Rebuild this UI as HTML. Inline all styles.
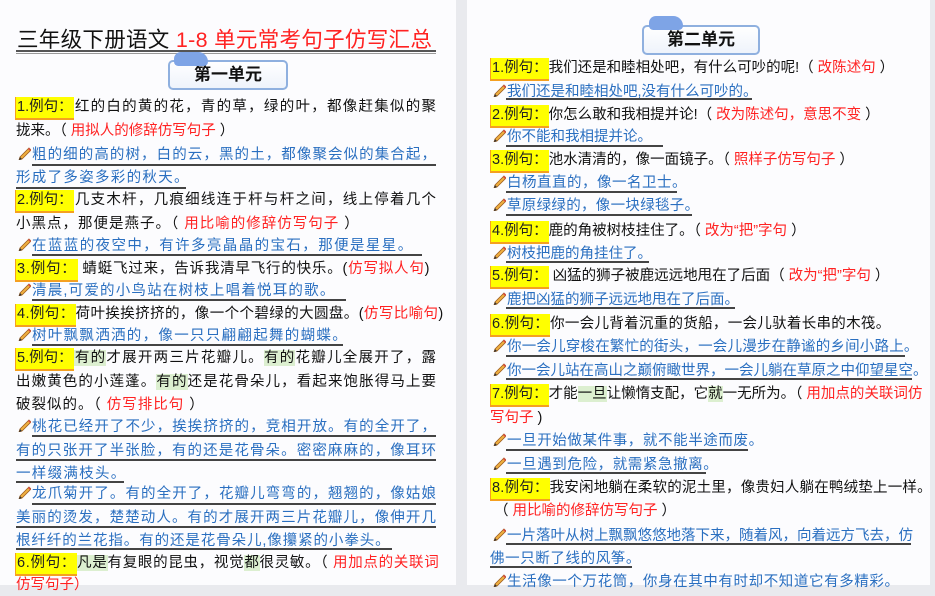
<!DOCTYPE html>
<html><head><meta charset="utf-8"><style>
body{margin:0;width:935px;height:585px;overflow:hidden;background:#e9eaee;position:relative;font-family:"Liberation Sans","Noto Sans CJK SC",sans-serif;}
.pg{position:absolute;top:0;height:585px;background:#fcfcfe;}
.l{position:absolute;white-space:nowrap;height:22px;line-height:22px;font-size:14.5px;color:#111;}
.j{text-align:justify;text-align-last:justify;}
.r{color:#f22;}
.b{color:#2a6fc0;}
.lab{display:inline-block;background:#ffff00;border-left:1px solid #f5a020;border-bottom:2px solid #f5a020;padding:0 1px;height:21px;line-height:21px;color:#222;}
.ul{position:absolute;height:2px;background:#444;}
.g{background:#dcefd0;}
.pen{position:absolute;width:13px;height:13px;}
.badge{position:absolute;height:26px;border:2px solid #8fb0df;border-radius:5px;background:linear-gradient(#fff,#eef3fb);font-size:17px;font-weight:bold;text-align:center;line-height:26px;color:#111;}
.cloud{position:absolute;width:34px;height:14px;background:#7ea4e6;border-radius:10px 14px 6px 6px;}
</style></head><body>
<div class="pg" style="left:0;width:456px;"></div>
<div class="pg" style="left:467px;width:463px;"></div>

<!-- title -->
<div class="l" style="left:17px;top:26px;height:28px;line-height:28px;font-size:21.5px;letter-spacing:0.3px;">三年级下册语文 <span class="r">1-8 单元常考句子仿写汇总</span></div>
<div class="ul" style="left:16px;top:50px;width:420px;height:2px;background:#555"></div>
<div class="ul" style="left:16px;top:53px;width:420px;height:1px;background:#999"></div>

<div class="badge" style="left:168px;top:60px;width:116px;">第一单元</div>
<div class="cloud" style="left:174px;top:52px;"></div>
<div class="badge" style="left:642px;top:25px;width:114px;">第二单元</div>
<div class="cloud" style="left:649px;top:16px;"></div>

<svg width="0" height="0" style="position:absolute"><defs><g id="p"><path d="M11 1 L13 3 L4 12 L1 13 L2 10 Z" fill="#f0b040" stroke="#a06020" stroke-width="0.8"/><path d="M11 1 L13 3 L12 4 L10 2Z" fill="#d44"/><path d="M1 13 L2 10 L4 12Z" fill="#333"/></g></defs></svg>

<!-- LEFT -->
<div class="l j" style="left:15px;top:96px;width:421px;"><span class="lab">1.例句：</span>红的白的黄的花，青的草，绿的叶，都像赶集似的聚</div>
<div class="l" style="left:16px;top:120px;">拢来。（ <span class="r">用拟人的修辞仿写句子</span> ）</div>
<svg class="pen" style="left:18px;top:147px"><use href="#p"/></svg>
<div class="l j b" style="left:32px;top:144px;width:404px;">粗的细的高的树，白的云，黑的土，都像聚会似的集合起，</div><div class="ul" style="left:32px;top:164px;width:404px"></div>
<div class="l b" style="left:16px;top:167px;letter-spacing:1.3px">形成了多姿多彩的秋天。</div><div class="ul" style="left:16px;top:187px;width:170px"></div>
<div class="l j" style="left:15px;top:189px;width:421px;"><span class="lab">2.例句：</span>几支木杆，几痕细线连于杆与杆之间，线上停着几个</div>
<div class="l" style="left:16px;top:213px;letter-spacing:1px">小黑点，那便是燕子。（ <span class="r">用比喻的修辞仿写句子</span> ）</div>
<svg class="pen" style="left:18px;top:238px"><use href="#p"/></svg>
<div class="l b" style="left:32px;top:235px;letter-spacing:1.4px">在蓝蓝的夜空中，有许多亮晶晶的宝石，那便是星星。</div><div class="ul" style="left:32px;top:254px;width:390px"></div>
<div class="l" style="left:15px;top:258px;letter-spacing:0.8px"><span class="lab">3.例句：</span> 蜻蜓飞过来，告诉我清早飞行的快乐。(<span class="r">仿写拟人句</span>)</div>
<svg class="pen" style="left:18px;top:283px"><use href="#p"/></svg>
<div class="l b" style="left:32px;top:280px;letter-spacing:1.2px">清晨,可爱的小鸟站在树枝上唱着悦耳的歌。</div><div class="ul" style="left:32px;top:299px;width:314px"></div>
<div class="l" style="left:15px;top:303px;letter-spacing:0.4px"><span class="lab">4.例句：</span>荷叶挨挨挤挤的，像一个个碧绿的大圆盘。(<span class="r">仿写比喻句</span>)</div>
<svg class="pen" style="left:18px;top:328px"><use href="#p"/></svg>
<div class="l b" style="left:32px;top:325px;letter-spacing:1.3px">树叶飘飘洒洒的，像一只只翩翩起舞的蝴蝶。</div><div class="ul" style="left:32px;top:344px;width:311px"></div>
<div class="l j" style="left:15px;top:347px;width:421px;"><span class="lab">5.例句：</span><span class="g">有的</span>才展开两三片花瓣儿。<span class="g">有的</span>花瓣儿全展开了，露</div>
<div class="l j" style="left:16px;top:371px;width:420px;">出嫩黄色的小莲蓬。<span class="g">有的</span>还是花骨朵儿，看起来饱胀得马上要</div>
<div class="l" style="left:16px;top:394px;letter-spacing:1px">破裂似的。（ <span class="r">仿写排比句</span> ）</div>
<svg class="pen" style="left:18px;top:419px"><use href="#p"/></svg>
<div class="l j b" style="left:32px;top:416px;width:404px;">桃花已经开了不少，挨挨挤挤的，竞相开放。有的全开了，</div><div class="ul" style="left:32px;top:435px;width:404px"></div>
<div class="l j b" style="left:16px;top:440px;width:420px;">有的只张开了半张脸，有的还是花骨朵。密密麻麻的，像耳环</div><div class="ul" style="left:16px;top:459px;width:420px"></div>
<div class="l b" style="left:16px;top:463px;letter-spacing:1.3px">一样缀满枝头。</div><div class="ul" style="left:16px;top:481px;width:108px"></div>
<svg class="pen" style="left:18px;top:486px"><use href="#p"/></svg>
<div class="l j b" style="left:32px;top:483px;width:404px;">龙爪菊开了。有的全开了，花瓣儿弯弯的，翘翘的，像姑娘</div><div class="ul" style="left:32px;top:503px;width:404px"></div>
<div class="l j b" style="left:16px;top:507px;width:420px;">美丽的烫发，楚楚动人。有的才展开两三片花瓣儿，像伸开几</div><div class="ul" style="left:16px;top:526px;width:420px"></div>
<div class="l b" style="left:16px;top:530px;letter-spacing:0.9px">根纤纤的兰花指。有的还是花骨朵儿,像攥紧的小拳头。</div><div class="ul" style="left:16px;top:548px;width:376px"></div>
<div class="l" style="left:15px;top:552px;letter-spacing:0.7px"><span class="lab">6.例句：</span><span class="g">凡是</span>有复眼的昆虫，视觉<span class="g">都</span>很灵敏。（ <span class="r">用加点的关联词</span></div>
<div class="l r" style="left:16px;top:574px;">仿写句子）</div>

<!-- RIGHT -->
<div class="l" style="left:490px;top:57px;"><span class="lab">1.例句：</span>我们还是和睦相处吧，有什么可吵的呢!（ <span class="r">改陈述句</span> ）</div>
<svg class="pen" style="left:493px;top:84px"><use href="#p"/></svg>
<div class="l b" style="left:507px;top:81px;">我们还是和睦相处吧,没有什么可吵的。</div><div class="ul" style="left:506px;top:98px;width:246px"></div>
<div class="l" style="left:490px;top:104px;"><span class="lab">2.例句：</span>你怎么敢和我相提并论!（ <span class="r">改为陈述句，意思不变</span> ）</div>
<svg class="pen" style="left:493px;top:129px"><use href="#p"/></svg>
<div class="l b" style="left:507px;top:126px;">你不能和我相提并论。</div><div class="ul" style="left:506px;top:145px;width:157px"></div>
<div class="l" style="left:490px;top:149px;"><span class="lab">3.例句：</span>池水清清的，像一面镜子。（ <span class="r">照样子仿写句子</span> ）</div>
<svg class="pen" style="left:493px;top:175px"><use href="#p"/></svg>
<div class="l b" style="left:507px;top:172px;letter-spacing:0.5px">白杨直直的，像一名卫士。</div><div class="ul" style="left:506px;top:191px;width:171px"></div>
<svg class="pen" style="left:493px;top:198px"><use href="#p"/></svg>
<div class="l b" style="left:507px;top:195px;letter-spacing:0.3px">草原绿绿的，像一块绿毯子。</div><div class="ul" style="left:506px;top:214px;width:186px"></div>
<div class="l" style="left:490px;top:220px;"><span class="lab">4.例句：</span>鹿的角被树枝挂住了。（ <span class="r">改为“把”字句</span> ）</div>
<svg class="pen" style="left:493px;top:246px"><use href="#p"/></svg>
<div class="l b" style="left:507px;top:243px;">树枝把鹿的角挂住了。</div><div class="ul" style="left:506px;top:261px;width:143px"></div>
<div class="l" style="left:490px;top:265px;"><span class="lab">5.例句：</span> 凶猛的狮子被鹿远远地甩在了后面（ <span class="r">改为“把”字句</span> ）</div>
<svg class="pen" style="left:493px;top:292px"><use href="#p"/></svg>
<div class="l b" style="left:507px;top:289px;">鹿把凶猛的狮子远远地甩在了后面。</div><div class="ul" style="left:506px;top:307px;width:229px"></div>
<div class="l" style="left:490px;top:313px;letter-spacing:0.3px"><span class="lab">6.例句：</span>你一会儿背着沉重的货船，一会儿驮着长串的木筏。</div>
<svg class="pen" style="left:493px;top:339px"><use href="#p"/></svg>
<div class="l b" style="left:507px;top:336px;letter-spacing:0.2px">你一会儿穿梭在繁忙的街头，一会儿漫步在静谧的乡间小路上。</div><div class="ul" style="left:506px;top:355px;width:399px"></div>
<svg class="pen" style="left:493px;top:363px"><use href="#p"/></svg>
<div class="l b" style="left:507px;top:360px;">你一会儿站在高山之巅俯瞰世界，一会儿躺在草原之中仰望星空。</div><div class="ul" style="left:506px;top:378px;width:406px"></div>
<div class="l" style="left:490px;top:383px;"><span class="lab">7.例句：</span>才能<span class="g">一旦</span>让懒惰支配，它<span class="g">就</span>一无所为。（ <span class="r">用加点的关联词仿</span></div>
<div class="l r" style="left:490px;top:407px;">写句子 <span style="color:#111">)</span></div>
<svg class="pen" style="left:493px;top:433px"><use href="#p"/></svg>
<div class="l b" style="left:507px;top:430px;letter-spacing:0.6px">一旦开始做某件事，就不能半途而废。</div><div class="ul" style="left:506px;top:449px;width:242px"></div>
<svg class="pen" style="left:493px;top:457px"><use href="#p"/></svg>
<div class="l b" style="left:507px;top:454px;letter-spacing:0.6px">一旦遇到危险，就需紧急撤离。</div><div class="ul" style="left:506px;top:472px;width:200px"></div>
<div class="l" style="left:490px;top:477px;letter-spacing:0.2px"><span class="lab">8.例句：</span>我安闲地躺在柔软的泥土里，像贵妇人躺在鸭绒垫上一样。</div>
<div class="l" style="left:494px;top:500px;">（ <span class="r">用比喻的修辞仿写句子</span> ）</div>
<svg class="pen" style="left:493px;top:528px"><use href="#p"/></svg>
<div class="l j b" style="left:507px;top:525px;width:404px;">一片落叶从树上飘飘悠悠地落下来，随着风，向着远方飞去，仿</div><div class="ul" style="left:506px;top:543px;width:405px"></div>
<div class="l b" style="left:490px;top:548px;letter-spacing:0.6px">佛一只断了线的风筝。</div><div class="ul" style="left:490px;top:566px;width:142px"></div>
<svg class="pen" style="left:493px;top:574px"><use href="#p"/></svg>
<div class="l b" style="left:507px;top:571px;letter-spacing:0.6px">生活像一个万花筒，你身在其中有时却不知道它有多精彩。</div>
</body></html>
